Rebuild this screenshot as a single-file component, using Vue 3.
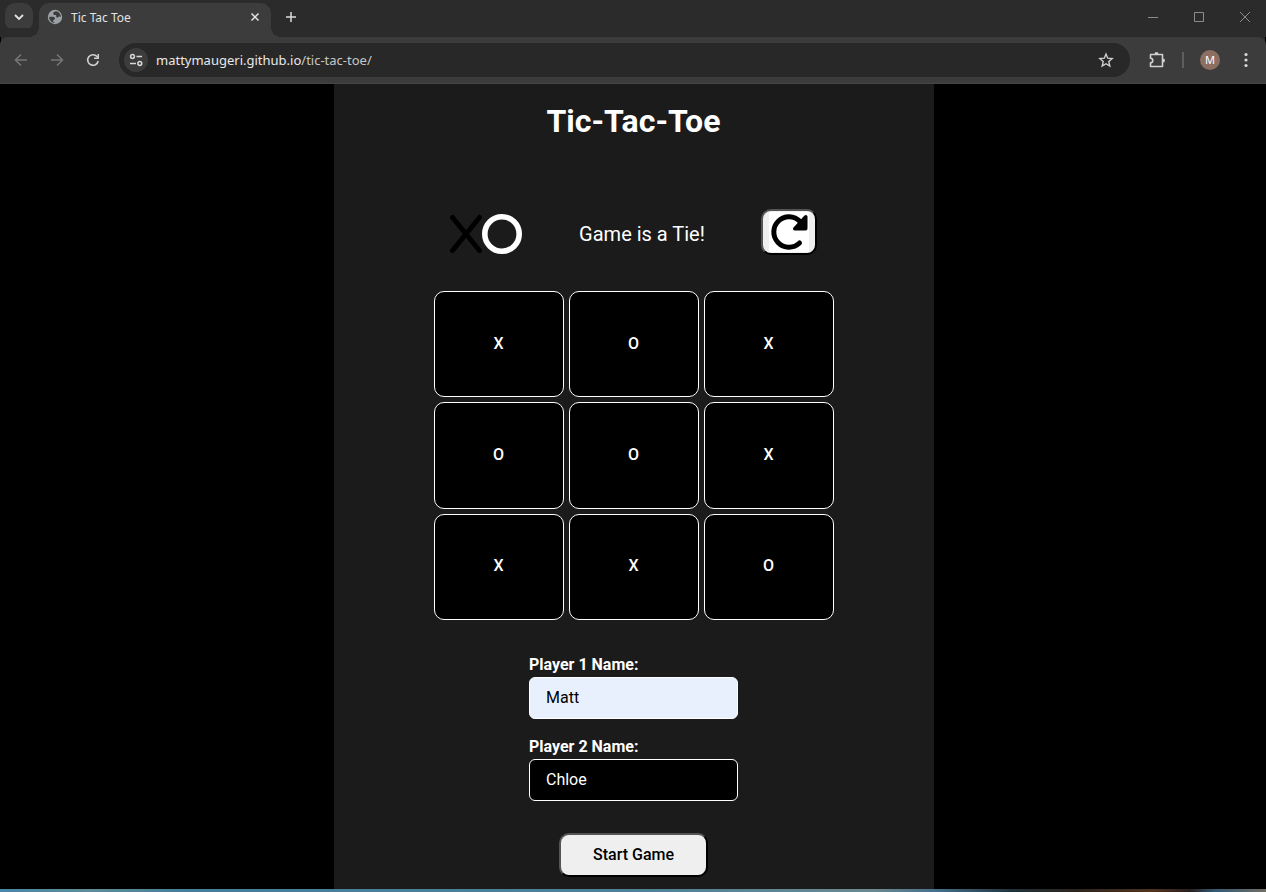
<script setup>
import { ref } from 'vue'

const cells = ref(['X', 'O', 'X', 'O', 'O', 'X', 'X', 'X', 'O'])
const players = ref([
  { id: 'player1', label: 'Player 1 Name:', name: 'Matt', filled: true },
  { id: 'player2', label: 'Player 2 Name:', name: 'Chloe', filled: false },
])
</script>

<template>
  <div class="window">
    <header class="tabs">
      <button class="tab-search" aria-label="Search tabs">
        <svg width="28" height="28" viewBox="0 0 28 28"><path d="M10 12l4 4 4-4" fill="none" stroke="#e3e3e3" stroke-width="1.800" /></svg>
      </button>
      <div class="tab">
        <svg class="globe" width="16" height="16" viewBox="0 0 16 16">
          <circle cx="8" cy="8" r="7.200" fill="#9aa0a6" />
          <path d="M9.500 2.200C7 2.500 5.800 3.600 6.300 5c.4 1.100 1.500 1.100 2.300 1 .6 0 .8.700.6 1.400-.2.800.7 1.200 1.500 1 .9-.2 1.300-.9 2.300-.8l1 .2C13.600 5 12 2.900 9.500 2.200zM2.200 8c1.500-.2 3.800-.4 5 .3 1 .6.9 1.600.3 2.200-.5.600-1.400.6-1.500 1.400-.1.700.5 1 1.300 1.100l.2 1C4.300 13.600 2.200 11 2.200 8z" fill="#3c3c3c" />
        </svg>
        <span class="tab-title">Tic Tac Toe</span>
        <button class="tab-close" aria-label="Close tab">
          <svg width="16" height="16" viewBox="0 0 16 16"><path d="M4.500 4.500l7 7M11.500 4.500l-7 7" stroke="#e3e3e3" stroke-width="1.500" /></svg>
        </button>
      </div>
      <button class="new-tab" aria-label="New tab">
        <svg width="16" height="16" viewBox="0 0 16 16"><path d="M8 3v10M3 8h10" stroke="#dcdcdc" stroke-width="1.500" /></svg>
      </button>
      <div class="controls">
        <button aria-label="Minimize"><svg width="46" height="34" viewBox="0 0 46 34"><path d="M18 17.500h10" stroke="#8c8c8c" /></svg></button>
        <button aria-label="Maximize"><svg width="46" height="34" viewBox="0 0 46 34"><path d="M18.500 12.500h9v9h-9z" fill="none" stroke="#8c8c8c" /></svg></button>
        <button aria-label="Close"><svg width="46" height="34" viewBox="0 0 46 34"><path d="M18 12l10 10M28 12l-10 10" stroke="#8c8c8c" /></svg></button>
      </div>
    </header>

    <nav class="toolbar">
      <button class="nav" aria-label="Back"><svg width="16" height="16" viewBox="0 0 16 16"><path d="M14 8H3M8 2.500L2.500 8 8 13.500" fill="none" stroke="#757575" stroke-width="1.600" /></svg></button>
      <button class="nav" aria-label="Forward"><svg width="16" height="16" viewBox="0 0 16 16"><path d="M2 8h11M8 2.500L13.500 8 8 13.500" fill="none" stroke="#757575" stroke-width="1.600" /></svg></button>
      <button class="nav" aria-label="Reload"><svg width="16" height="16" viewBox="0 0 16 16"><path d="M13.200 9A5.300 5.300 0 1 1 12 4.500l1 1" fill="none" stroke="#d0d0d0" stroke-width="1.600" /><path d="M14 2v5H9V5.500h3.500V2z" fill="#d0d0d0" /></svg></button>
      <div class="omnibox">
        <button class="site-info" aria-label="View site information">
          <svg width="24" height="24" viewBox="0 0 24 24" fill="none" stroke="#d8d8d8" stroke-width="1.500"><circle cx="8.500" cy="8.500" r="1.900" /><path d="M12.500 8.500H18M6 15.500h6" /><circle cx="15.800" cy="15.500" r="1.900" /></svg>
        </button>
        <a class="address" href="#"><span class="host">mattymaugeri.github.io</span>/tic-tac-toe/</a>
        <button class="star" aria-label="Bookmark this tab">
          <svg width="16" height="16" viewBox="0 0 16 16"><path d="M8 2l1.700 4.200 4.500.4-3.400 3 1 4.400L8 11.700 4.200 14l1-4.400-3.400-3 4.500-.4z" fill="none" stroke="#d0d0d0" stroke-width="1.400" /></svg>
        </button>
      </div>
      <button class="extensions" aria-label="Extensions">
        <svg width="20" height="20" viewBox="0 0 20 20"><path d="M3.500 4.500h12v12h-12v-3.700a2.300 2.300 0 0 0 0-4.600z" fill="none" stroke="#d0d0d0" stroke-width="1.600" stroke-linejoin="round" /><path d="M7.500 4a2 2 0 0 1 4 0zM16 8.500a2 2 0 0 1 0 4z" fill="#d0d0d0" /></svg>
      </button>
      <span class="divider"></span>
      <button class="profile" aria-label="Profile">M</button>
      <button class="menu" aria-label="Menu">
        <svg width="16" height="16" viewBox="0 0 16 16" fill="#d8d8d8"><circle cx="8" cy="2.500" r="1.600" /><circle cx="8" cy="8" r="1.600" /><circle cx="8" cy="13.500" r="1.600" /></svg>
      </button>
    </nav>

    <div class="page">
      <main class="game">
        <h1>Tic-Tac-Toe</h1>
        <div class="status">
          <svg class="logo" width="74" height="42" viewBox="0 0 74 42" fill="none">
            <path d="M3.500 4.500l27 33M30.500 4.500l-27 33" stroke="#000" stroke-width="5" stroke-linecap="round" />
            <circle cx="53" cy="21" r="17.200" stroke="#fff" stroke-width="5.600" />
          </svg>
          <p>Game is a Tie!</p>
          <button class="reset" aria-label="Reset game">
            <svg width="40" height="40" viewBox="0 0 40 40">
              <path d="M30.500 31A15.200 15.200 0 1 1 31 9.500" fill="none" stroke="#000" stroke-width="5" stroke-linecap="round" />
              <path d="M38.500 4.500v12q0 2-2 2H26q-3-.5-1.500-3l11-12q2.500-1.500 3 1z" fill="#000" />
            </svg>
          </button>
        </div>
        <div class="board">
          <button v-for="(mark, i) in cells" :key="i" class="cell">{{ mark }}</button>
        </div>
        <form class="players" @submit.prevent>
          <div v-for="p in players" :key="p.id" class="field">
            <label :for="p.id">{{ p.label }}</label>
            <input :id="p.id" v-model="p.name" type="text" :class="{ filled: p.filled }" />
          </div>
          <button class="start" type="submit">Start Game</button>
        </form>
      </main>
    </div>
    <div class="desktop"></div>
  </div>
</template>

<style>
body {
  background: #000;
}
</style>

<style scoped>
* {
  box-sizing: border-box;
}
button {
  font-family: inherit;
}
svg {
  display: block;
}
.window {
  min-height: 100vh;
  display: flex;
  flex-direction: column;
  background: #000;
  font-family: Roboto, sans-serif;
}
.tabs,
.toolbar {
  font-family: "Noto Sans", "Open Sans", sans-serif;
}
.tabs button,
.toolbar button {
  border: 0;
  padding: 0;
  background: none;
  flex: none;
}
.tabs {
  display: flex;
  height: 37px;
  padding-left: 5px;
  background: #2b2b2b;
}
.tabs .tab-search {
  width: 28px;
  height: 28px;
  margin-top: 3px;
  border-radius: 10px;
  background: #3c3c3c;
}
.tab {
  position: relative;
  display: flex;
  align-items: center;
  width: 232px;
  height: 34px;
  margin: 3px 0 0 6px;
  padding: 0 8px 6px;
  border-radius: 10px 10px 0 0;
  background: #3c3c3c;
}
.tab::before,
.tab::after {
  content: "";
  position: absolute;
  bottom: 0;
  width: 10px;
  height: 10px;
}
.tab::before {
  right: 100%;
  background: radial-gradient(circle at 0 0, transparent 10px, #3c3c3c 10px);
}
.tab::after {
  left: 100%;
  background: radial-gradient(circle at 100% 0, transparent 10px, #3c3c3c 10px);
}
.tab-title {
  flex: 1;
  margin-left: 8px;
  padding-top: 2px;
  font-size: 12px;
  line-height: 16px;
  color: #e3e3e3;
}
.tabs .new-tab {
  width: 16px;
  height: 34px;
  margin-left: 12px;
}
.controls {
  display: flex;
  height: 34px;
  margin-left: auto;
  margin-right: -2px;
  overflow: hidden;
}
.toolbar {
  display: flex;
  align-items: center;
  height: 47px;
  padding: 0 12px;
  border-bottom: 1px solid #474747;
  border-radius: 8px 8px 0 0;
  background: #3c3c3c;
  box-shadow: 0 -10px 0 -1px #2b2b2b;
}
.nav {
  width: 16px;
  height: 16px;
}
.nav + .nav {
  margin-left: 20px;
}
.nav:first-child {
  margin-left: 1px;
}
.omnibox {
  flex: 1;
  display: flex;
  align-items: center;
  height: 34px;
  margin-left: 18px;
  padding: 0 16px 0 5px;
  border-radius: 17px;
  background: #282828;
}
.toolbar .site-info {
  width: 24px;
  height: 24px;
  border-radius: 50%;
  background: #3c3c3c;
}
.address {
  flex: 1;
  margin-left: 8px;
  font-size: 13px;
  line-height: 20px;
  color: #c7c7c7;
  text-decoration: none;
}
.host {
  color: #e8e8e8;
}
.toolbar .extensions {
  margin-left: 17px;
}
.divider {
  width: 2px;
  height: 16px;
  margin: 0 16px 0 15px;
  background: #5e5e5e;
}
.toolbar .profile {
  width: 20px;
  height: 20px;
  border-radius: 50%;
  background: #8d6e63;
  color: #fff;
  font-size: 11px;
  line-height: 20px;
}
.menu {
  margin-left: 18px;
}
.page {
  flex: 1;
  display: flex;
  justify-content: center;
  padding-left: 1px;
}
.game {
  width: 600px;
  max-width: 100%;
  display: flex;
  flex-direction: column;
  align-items: center;
  padding: 18px 0 12px;
  background: #1b1b1b;
  color: #fff;
}
h1 {
  margin: 0;
  font-size: 32px;
  line-height: 38px;
}
.status {
  display: flex;
  align-items: flex-end;
  justify-content: space-between;
  width: 400px;
  max-width: 100%;
  margin-top: 69px;
  padding: 0 16px 0 15px;
}
.status p {
  margin: 0;
  font-size: 20px;
  line-height: 42px;
}
.reset,
.start {
  border: 2px outset #000;
  border-radius: 10px;
  background: #efefef;
  color: #000;
}
.reset {
  width: 56px;
  height: 46px;
  padding: 0;
  overflow: hidden;
}
.reset svg {
  margin: 0 auto;
  background: #fff;
}
.board {
  display: grid;
  grid-template-columns: repeat(3, 1fr);
  grid-template-rows: repeat(3, 1fr);
  gap: 5px;
  width: 400px;
  max-width: 100%;
  height: 329px;
  margin-top: 36px;
}
.cell {
  padding: 0 0 2px;
  border: 1px solid #fff;
  border-radius: 10px;
  background: #000;
  color: #fff;
  font-size: 16px;
  font-weight: 500;
}
.players {
  display: flex;
  flex-direction: column;
  margin-top: 35px;
}
.field {
  display: flex;
  flex-direction: column;
  gap: 3px;
  width: 209px;
  margin-bottom: 18px;
}
label {
  font-size: 16px;
  font-weight: 700;
  line-height: 19px;
}
input {
  width: 100%;
  height: 42px;
  padding: 0 16px 2px;
  border: 1px solid #fff;
  border-radius: 6px;
  background: #000;
  color: #fff;
  font-family: inherit;
  font-size: 16px;
}
input.filled {
  background: #e8f0fe;
  color: #000;
}
.start {
  align-self: center;
  margin-top: 14px;
  padding: 10px 32px;
  font-size: 16px;
  font-weight: 500;
  line-height: 20px;
}
.desktop {
  height: 3px;
  background: linear-gradient(90deg, #4787a8 0%, #5f8c97 7%, #447e9b 15%, #4c8199 50%, #6b898f 69%, #456f8b 74%, #20323b 80%, #2d251c 85%, #50331f 91%, #28201f 94%, #355975 96%, #706f64 100%);
}
</style>
